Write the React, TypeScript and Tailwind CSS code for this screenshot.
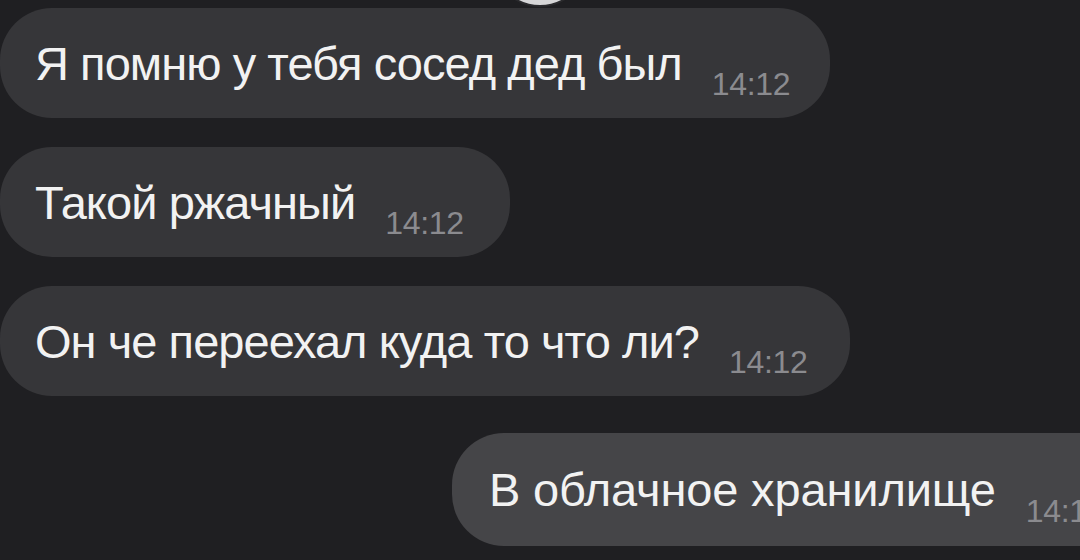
const messages = [
  { text: 'Я помню у тебя сосед дед был', time: '14:12', width: 'w-[830px]' },
  { text: 'Такой ржачный', time: '14:12', width: 'w-[510px]' },
  { text: 'Он че переехал куда то что ли?', time: '14:12', width: 'w-[850px]' },
];

function Bubble({
  text,
  time,
  className,
  textClass = 'tracking-[-0.02em]',
}: {
  text: string;
  time: string;
  className: string;
  textClass?: string;
}) {
  return (
    <div className={`h-[110px] rounded-[52px] flex items-center shrink-0 ${className}`}>
      <span className={`text-[47px] leading-none text-[#f2f2f2] whitespace-nowrap ${textClass}`}>{text}</span>
      <span className="ml-[30px] mt-[42px] text-[32px] leading-none tracking-[-0.01em] text-[#8b8b8f] whitespace-nowrap">
        {time}
      </span>
    </div>
  );
}

export default function App() {
  return (
    <div
      className="relative w-[1080px] h-[560px] overflow-hidden bg-[#1f1f22] flex flex-col pt-[8px] gap-[29px]"
      style={{ fontFamily: '"Liberation Sans", Arial, sans-serif' }}
    >
      {messages.map(m => (
        <Bubble key={m.text} text={m.text} time={m.time} className={`${m.width} bg-[#363639] pl-[35px]`} />
      ))}
      {/* own message, runs off the right edge */}
      <Bubble
        text="В облачное хранилище"
        time="14:12"
        textClass="tracking-[-0.003em]"
        className="self-end mt-[8px] h-[113px] w-[708px] mr-[-80px] bg-[#454548] pl-[37px]"
      />

      {/* avatar peeking in from the top */}
      <div className="absolute left-[492px] top-[-89px] w-[96px] h-[96px] rounded-full bg-[#d6d6d8] border-[2px] border-[#2a2a2d]" />
    </div>
  );
}
